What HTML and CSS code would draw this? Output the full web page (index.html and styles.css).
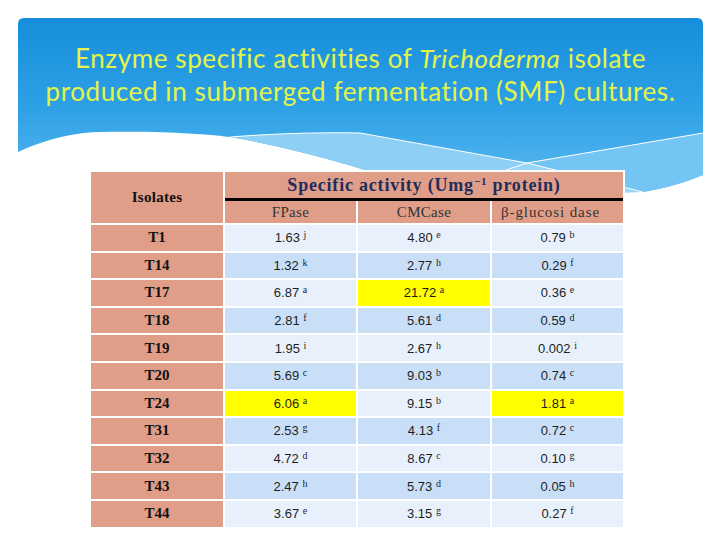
FILE: index.html
```html
<!DOCTYPE html>
<html>
<head>
<meta charset="utf-8">
<link rel="stylesheet" href="styles.css">
</head>
<body>
<div class="slide">
  <header class="band">
    <svg class="band-bg" viewBox="0 0 685 180" width="685" height="180" xmlns="http://www.w3.org/2000/svg">
      <defs>
        <linearGradient id="g" x1="0" y1="0" x2="0" y2="1">
          <stop offset="0" stop-color="#168edb"/>
          <stop offset="0.5" stop-color="#2ea0e6"/>
          <stop offset="1" stop-color="#5dbcf1"/>
        </linearGradient>
      </defs>
      <path d="M0,6 Q0,0 6,0 H679 Q685,0 685,6 V157 C670,163 650,170 625,174 L450,178 L360,156 C320,143 260,127 212,119 C180,115 130,113 82,114 C60,114 30,120 0,134 Z" fill="url(#g)"/>
      <path d="M212,119 C250,116 300,114 342,115 L509,145 L420,175 L360,156 C320,143 260,127 212,119 Z" fill="#8ecff5"/>
      <path d="M509,145 L685,115 V157 C670,163 650,170 625,174 Z" fill="#74c5f3"/>
      <path d="M509,145 L625,174 L420,175 Z" fill="#9ad5f7"/>
      <path d="M212,119 C250,116 300,114 342,115 L509,145 L625,174" fill="none" stroke="#ffffff" stroke-width="1"/>
      <path d="M420,175 L509,145 L685,115" fill="none" stroke="#ffffff" stroke-width="1"/>
    </svg>
    <h1 class="title">Enzyme specific activities of <em>Trichoderma</em> isolate<br>produced in submerged fermentation (SMF) cultures.</h1>
  </header>

  <table class="data">
    <colgroup>
      <col class="c-iso"><col class="c-a"><col class="c-b"><col class="c-c">
    </colgroup>
    <thead>
      <tr>
        <th class="iso-head" rowspan="2">Isolates</th>
        <th class="span-head" colspan="3">Specific activity (Umg<sup>−1</sup> protein)</th>
      </tr>
      <tr class="sub">
        <th>FPase</th>
        <th>CMCase</th>
        <th><span class="beta">β-glucosi dase</span></th>
      </tr>
    </thead>
    <tbody>
      <tr class="light"><th>T1</th><td>1.63 <sup>j</sup></td><td>4.80 <sup>e</sup></td><td>0.79 <sup>b</sup></td></tr>
      <tr class="dark"><th>T14</th><td>1.32 <sup>k</sup></td><td>2.77 <sup>h</sup></td><td>0.29 <sup>f</sup></td></tr>
      <tr class="light"><th>T17</th><td>6.87 <sup>a</sup></td><td class="hi">21.72 <sup>a</sup></td><td>0.36 <sup>e</sup></td></tr>
      <tr class="dark"><th>T18</th><td>2.81 <sup>f</sup></td><td>5.61 <sup>d</sup></td><td>0.59 <sup>d</sup></td></tr>
      <tr class="light"><th>T19</th><td>1.95 <sup>i</sup></td><td>2.67 <sup>h</sup></td><td>0.002 <sup>i</sup></td></tr>
      <tr class="dark"><th>T20</th><td>5.69 <sup>c</sup></td><td>9.03 <sup>b</sup></td><td>0.74 <sup>c</sup></td></tr>
      <tr class="light"><th>T24</th><td class="hi">6.06 <sup>a</sup></td><td>9.15 <sup>b</sup></td><td class="hi">1.81 <sup>a</sup></td></tr>
      <tr class="dark"><th>T31</th><td>2.53 <sup>g</sup></td><td>4.13 <sup>f</sup></td><td>0.72 <sup>c</sup></td></tr>
      <tr class="light"><th>T32</th><td>4.72 <sup>d</sup></td><td>8.67 <sup>c</sup></td><td>0.10 <sup>g</sup></td></tr>
      <tr class="dark"><th>T43</th><td>2.47 <sup>h</sup></td><td>5.73 <sup>d</sup></td><td>0.05 <sup>h</sup></td></tr>
      <tr class="light"><th>T44</th><td>3.67 <sup>e</sup></td><td>3.15 <sup>g</sup></td><td>0.27 <sup>f</sup></td></tr>
    </tbody>
  </table>
</div>
</body>
</html>
```

FILE: styles.css
```css
html, body {
  margin: 0;
  padding: 0;
  background: #ffffff;
}

.slide {
  width: 720px;
  height: 540px;
  overflow: hidden;
}

.band {
  position: relative;
  margin: 18px 17px 0 18px;
  height: 152px;
}

.band-bg {
  position: absolute;
  left: 0;
  top: 0;
  z-index: 0;
}

.title {
  position: relative;
  z-index: 1;
  margin: 0 -20px;
  padding-top: 24px;
  font-family: Lato, "Open Sans", sans-serif;
  font-weight: 400;
  font-size: 26px;
  line-height: 33px;
  color: #e4f548;
  text-align: center;
  letter-spacing: 0.6px;
  white-space: nowrap;
}

.title em {
  font-style: italic;
}

.data {
  position: relative;
  z-index: 1;
  margin-left: 89px;
  border-collapse: separate;
  border-spacing: 2px;
  background: #ffffff;
  table-layout: fixed;
  width: 536px;
}

.c-iso { width: 132px; }
.c-a { width: 131px; }
.c-b { width: 132px; }
.c-c { width: 131px; }

.data th,
.data td {
  padding: 0;
  text-align: center;
  vertical-align: middle;
}

.iso-head {
  background: #e09e89;
  font-family: "Liberation Serif", serif;
  font-weight: 700;
  font-size: 15px;
  letter-spacing: 0.3px;
  color: #111111;
}

.span-head {
  height: 27px;
  box-sizing: border-box;
  background: #e09e89;
  border-bottom: 1px solid #000000;
  box-shadow: 0 2px 0 #000000;
  font-family: "Liberation Serif", serif;
  font-weight: 700;
  font-size: 18px;
  color: #1f2d5c;
  padding-top: 3px;
  letter-spacing: 0.8px;
}

.span-head sup {
  font-size: 11px;
  vertical-align: 6px;
  line-height: 0;
}

.sub th {
  height: 22px;
  background: #e09e89;
  font-family: "Liberation Serif", serif;
  font-weight: 400;
  font-size: 15px;
  color: #333333;
  letter-spacing: 0.3px;
}

.beta {
  display: inline-block;
  letter-spacing: 0.9px;
  margin-right: 14px;
}

tbody th {
  height: 25.6px;
  background: #e09e89;
  font-family: "Liberation Serif", serif;
  font-weight: 700;
  font-size: 15px;
  color: #111111;
  padding-top: 2px;
  box-sizing: border-box;
}

tbody td {
  height: 25.6px;
  font-family: "Liberation Sans", sans-serif;
  font-size: 13px;
  color: #1e1e1e;
}

tbody td sup {
  font-family: "Liberation Serif", serif;
  font-size: 10px;
  vertical-align: 4px;
  line-height: 0;
}

.light td { background: #e8f1fb; }
.dark td { background: #c8dff7; }
.data td.hi { background: #ffff00; }
```
